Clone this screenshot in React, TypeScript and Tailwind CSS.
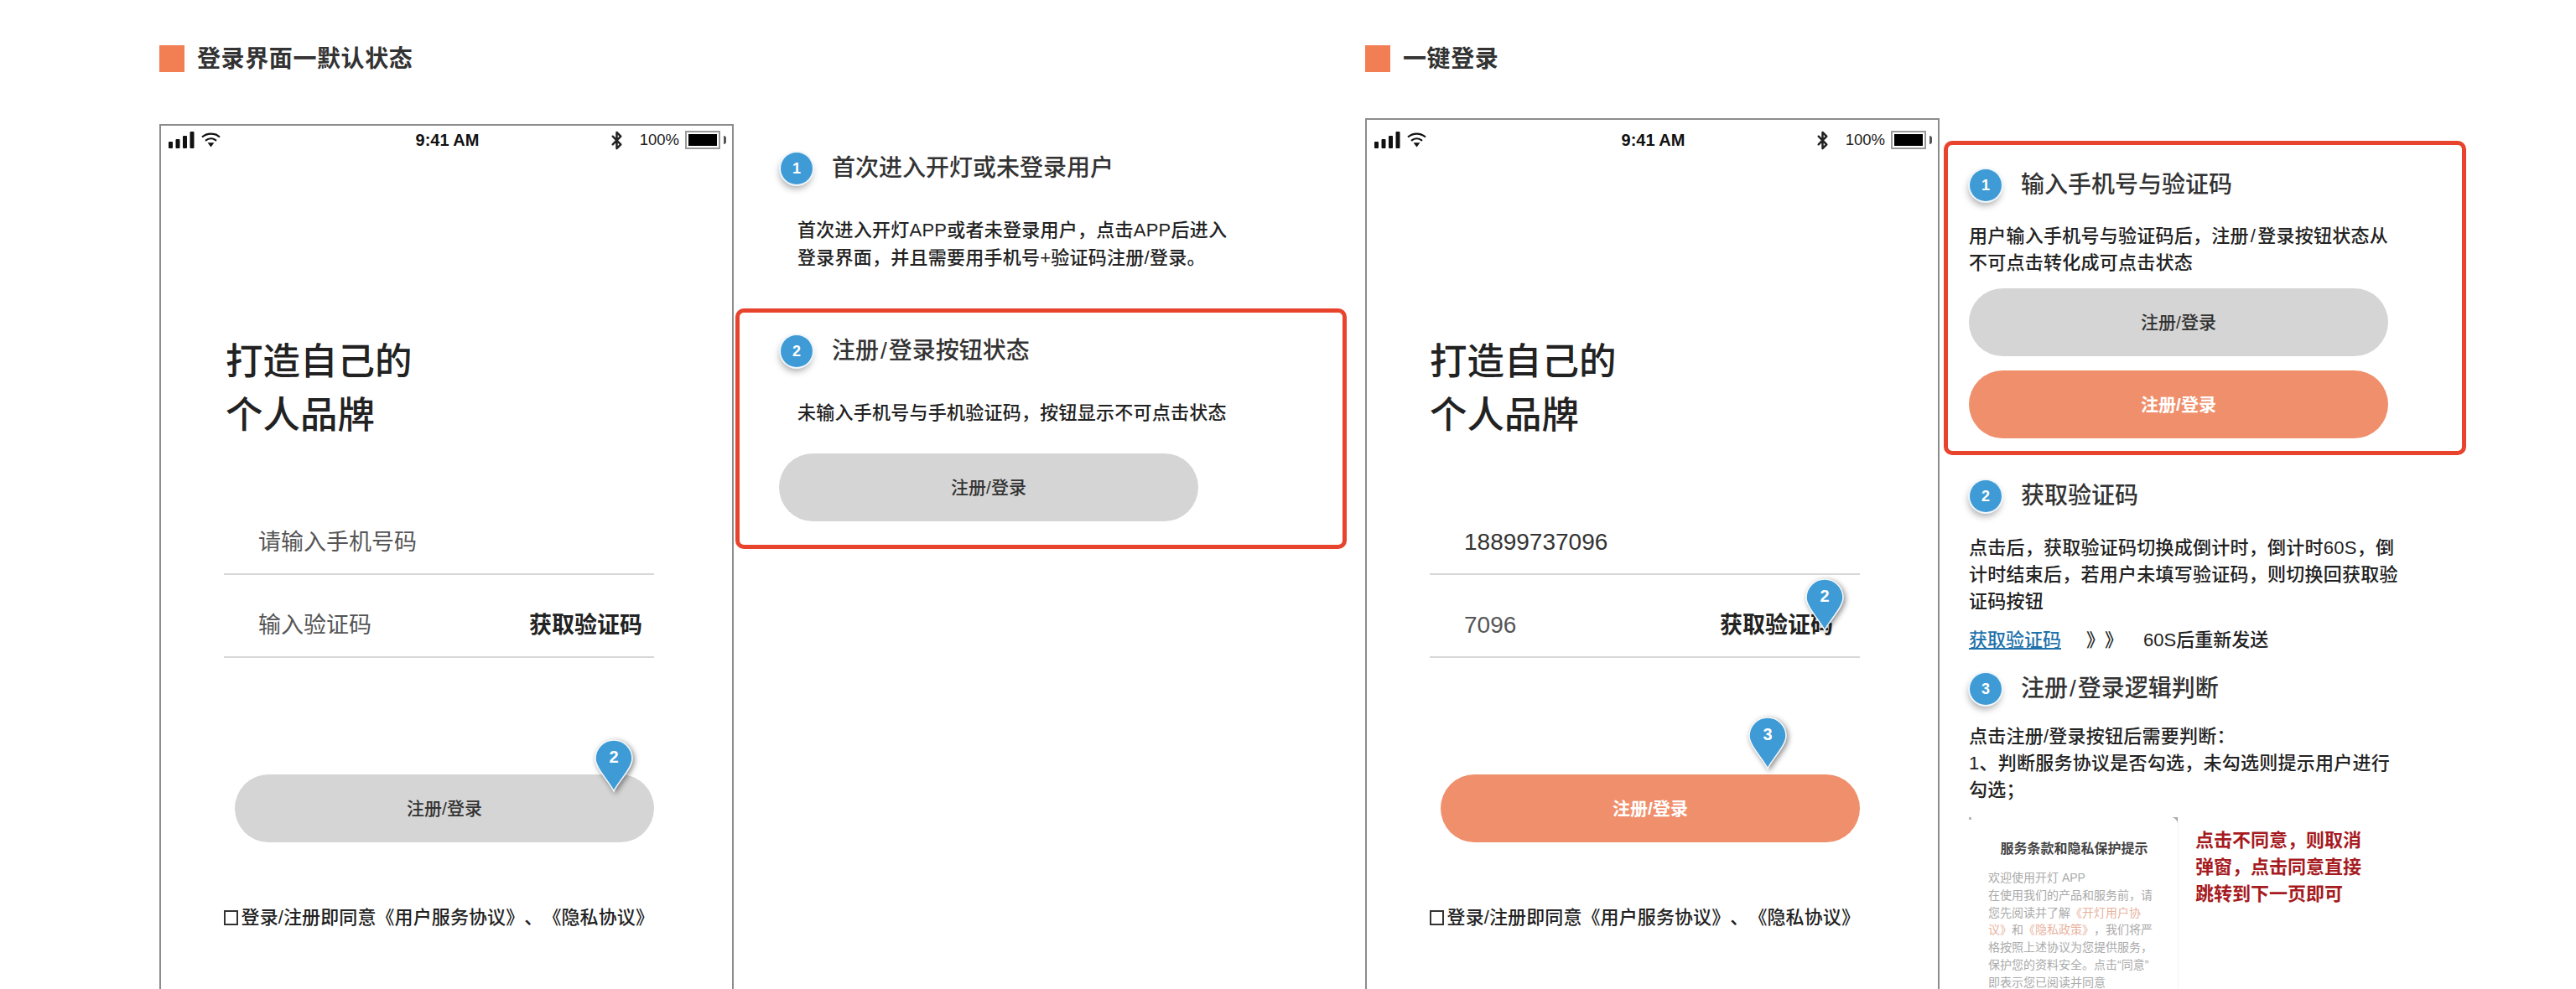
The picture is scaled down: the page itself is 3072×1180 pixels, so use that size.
import React from "react";
import { Bluetooth } from "lucide-react";

function SignalIcon() {
  return (
    <svg width="31" height="20" viewBox="0 0 31 20" fill="#111">
      <rect x="0" y="12" width="5" height="8" rx="1" />
      <rect x="8.5" y="9" width="5" height="11" rx="1" />
      <rect x="17" y="5" width="5" height="15" rx="1" />
      <rect x="25.5" y="0" width="5" height="20" rx="1" />
    </svg>
  );
}

function WifiIcon() {
  return (
    <svg width="23" height="18" viewBox="0 0 23 18" fill="none" stroke="#111" strokeWidth="2.2">
      <path d="M1 5.5 C7 0.2 16 0.2 22 5.5" />
      <path d="M5 9.8 C9 6.4 14 6.4 18 9.8" />
      <path d="M7.6 12.2 L15.4 12.2 L11.5 17.5 Z" fill="#111" stroke="none" />
    </svg>
  );
}

function StatusBar() {
  return (
    <div className="grid h-[34px] grid-cols-3 items-center pl-[9px] pr-[7px]">
      <div className="flex items-center gap-[8px]">
        <SignalIcon />
        <WifiIcon />
      </div>
      <div className="text-center text-[20px] font-bold leading-none text-[#111]">9:41 AM</div>
      <div className="flex items-center justify-end">
        <Bluetooth size={23} strokeWidth={2.6} color="#222" />
        <span className="ml-[16px] text-[18.5px] leading-none text-[#222]">100%</span>
        <div className="ml-[7px] h-[22px] w-[42px] border-2 border-[#9a9a9a] p-[2px]">
          <div className="h-full w-full bg-black" />
        </div>
        <div className="ml-[4px] h-[10px] w-[3px] rounded-r-full bg-[#555]" />
      </div>
    </div>
  );
}

function Pin({ n, className }: { n: number; className: string }) {
  return (
    <div className={`absolute h-[64px] w-[48px] ${className}`}>
      <svg width="48" height="64" viewBox="0 0 48 64" className="drop-shadow-[2px_2px_3px_rgba(0,0,0,0.45)]">
        <path
          d="M24 62 C19 51 2 35 2 23 A22 22 0 0 1 46 23 C46 35 29 51 24 62 Z"
          fill="#3f9bd6"
          stroke="#f4f8fb"
          strokeWidth="1.6"
        />
      </svg>
      <span className="absolute left-0 right-0 top-[9px] text-center text-[20px] font-bold leading-[24px] text-white">
        {n}
      </span>
    </div>
  );
}

function Badge({ n }: { n: number }) {
  return (
    <div className="flex h-[38px] w-[38px] shrink-0 items-center justify-center rounded-full bg-[#3f9bd6] text-[18px] font-bold leading-none text-white shadow-[-1px_5px_8px_rgba(0,0,0,0.35)] ring-2 ring-[#f0f6fb]">
      {n}
    </div>
  );
}

function SubmitButton({ active, className }: { active?: boolean; className: string }) {
  return (
    <div
      className={`flex h-[81px] w-[500px] items-center justify-center rounded-full text-[21px] ${
        active ? "bg-[#f08f6c] font-bold text-white" : "bg-[#d5d5d5] font-medium text-[#333]"
      } ${className}`}
    >
      注册/登录
    </div>
  );
}

function SectionTitle({ children }: { children: React.ReactNode }) {
  return (
    <div className="flex h-[32px] items-center gap-[15px]">
      <div className="h-[32px] w-[30px] bg-[#f27f54]" />
      <h2 className="pt-[2px] text-[28px] font-semibold leading-[32px] tracking-[0.6px] text-[#333]">{children}</h2>
    </div>
  );
}

function Slash() {
  return <span className="mx-[2px]">/</span>;
}

function Phone({ filled }: { filled?: boolean }) {
  return (
    <div
      className={`relative h-[1100px] w-[685px] shrink-0 border-2 border-[#8c8c8c] ${
        filled ? "mt-[55px] pt-[7px]" : "mt-[62px]"
      }`}
    >
      <StatusBar />
      <h1
        className={`mt-[216px] text-[44.5px] font-medium leading-[64px] text-[#222] ${
          filled ? "ml-[75px]" : "ml-[77px]"
        }`}
      >
        打造自己的
        <br />
        个人品牌
      </h1>
      <div className="ml-[75px] mt-[59px] flex w-[513px] flex-col">
        <div className="flex h-[99px] items-end border-b-2 border-[#d8d8d8] pb-[21px] pl-[41px]">
          <span className={`leading-[32px] ${filled ? "text-[28px] text-[#333]" : "text-[27px] text-[#555]"}`}>
            {filled ? "18899737096" : "请输入手机号码"}
          </span>
        </div>
        <div
          className={`flex h-[99px] items-end justify-between border-b-2 border-[#d8d8d8] pb-[21px] pl-[41px] ${
            filled ? "pr-[32px]" : "pr-[14px]"
          }`}
        >
          <span className={`leading-[32px] text-[#555] ${filled ? "text-[28px]" : "text-[27px]"}`}>
            {filled ? "7096" : "输入验证码"}
          </span>
          <span className="text-[27px] font-semibold leading-[32px] text-[#222]">获取验证码</span>
        </div>
        <SubmitButton active={filled} className="mt-[139px] self-end" />
        <div className="mt-[75px] flex h-[30px] items-center gap-[4px] whitespace-nowrap">
          <div className="h-[18px] w-[18px] border-2 border-[#333]" />
          <span className="text-[22px] font-medium leading-[30px] tracking-[0.1px] text-[#222]">
            登录/注册即同意《用户服务协议》、《隐私协议》
          </span>
        </div>
      </div>
      {filled ? (
        <>
          <Pin n={2} className="left-[522px] top-[547px]" />
          <Pin n={3} className="left-[454px] top-[712px]" />
        </>
      ) : (
        <Pin n={2} className="left-[516px] top-[732px]" />
      )}
    </div>
  );
}

function NoteHeading({ n, children }: { n: number; children: React.ReactNode }) {
  return (
    <div className="flex h-[38px] items-center gap-[23px]">
      <Badge n={n} />
      <h3 className="whitespace-nowrap text-[28px] font-medium leading-[38px] text-[#333]">{children}</h3>
    </div>
  );
}

function ModalPreview() {
  return (
    <div className="relative h-[230px] w-[250px] shrink-0 border-r border-[#f4f4f4] pl-[23px] pr-[8px] pt-[27px]">
      <svg width="7" height="8" viewBox="0 0 7 8" className="absolute right-0 top-0">
        <path d="M0 0 L7 0 L7 8 C7 4 4 1 0 0 Z" fill="#a8a8a8" />
      </svg>
      <div className="absolute left-0 top-0 h-[3px] w-[3px] bg-[#b5b5b5]" />
      <div className="-ml-[13px] text-center text-[16px] font-semibold leading-[22px] text-[#444]">
        服务条款和隐私保护提示
      </div>
      <p className="mt-[13px] whitespace-nowrap text-[14px] leading-[20.8px] text-[#aaa]">
        欢迎使用开灯 APP
        <br />
        在使用我们的产品和服务前，请
        <br />
        您先阅读并了解<span className="text-[#e8b39e]">《开灯用户协</span>
        <br />
        <span className="text-[#e8b39e]">议》</span>和<span className="text-[#e8b39e]">《隐私政策》</span>，我们将严
        <br />
        格按照上述协议为您提供服务，
        <br />
        保护您的资料安全。点击“同意”
        <br />
        即表示您已阅读并同意
      </p>
    </div>
  );
}

function DefaultNotes() {
  return (
    <div className="ml-[2px] mt-[62px] w-[729px] shrink-0">
      <div className="pl-[54px] pt-[34px]">
        <NoteHeading n={1}>首次进入开灯或未登录用户</NoteHeading>
      </div>
      <p className="ml-[74px] mt-[38px] whitespace-nowrap text-[22px] font-medium leading-[33px] tracking-[0.25px] text-[#222]">
        首次进入开灯APP或者未登录用户，点击APP后进入
        <br />
        登录界面，并且需要用手机号+验证码注册/登录。
      </p>
      <div className="mt-[44px] rounded-[10px] border-[5px] border-[#e8432d] pb-[28px] pl-[47px] pt-[27px]">
        <div className="pl-[2px]">
          <NoteHeading n={2}>
            注册
            <Slash />
            登录按钮状态
          </NoteHeading>
        </div>
        <p className="ml-[22px] mt-[38px] whitespace-nowrap text-[22px] font-medium leading-[33px] tracking-[0.25px] text-[#222]">
          未输入手机号与手机验证码，按钮显示不可点击状态
        </p>
        <SubmitButton className="mt-[32px]" />
      </div>
    </div>
  );
}

function QuickNotes() {
  return (
    <div className="ml-[5px] mt-[55px] w-[623px] shrink-0">
      <div className="mt-[27px] rounded-[10px] border-[5px] border-[#e8432d] pb-[15px] pl-[25px] pt-[29px]">
        <div className="pl-px">
          <NoteHeading n={1}>输入手机号与验证码</NoteHeading>
        </div>
        <p className="mt-[26px] whitespace-nowrap text-[22px] font-medium leading-[32px] tracking-[0.25px] text-[#222]">
          用户输入手机号与验证码后，注册
          <Slash />
          登录按钮状态从
          <br />
          不可点击转化成可点击状态
        </p>
        <SubmitButton className="mt-[14px]" />
        <SubmitButton active className="mt-[17px]" />
      </div>
      <div className="pl-[31px] pt-[30px]">
        <NoteHeading n={2}>获取验证码</NoteHeading>
        <p className="-ml-px mt-[27px] whitespace-nowrap text-[22px] font-medium leading-[32px] tracking-[0.25px] text-[#222]">
          点击后，获取验证码切换成倒计时，倒计时60S，倒
          <br />
          计时结束后，若用户未填写验证码，则切换回获取验
          <br />
          证码按钮
        </p>
        <div className="-ml-px mt-[14px] flex h-[32px] items-center whitespace-nowrap text-[22px] font-medium leading-[32px] text-[#222]">
          <span className="text-[#1f72ab] underline decoration-2 underline-offset-2">获取验证码</span>
          <span className="ml-[30px]">》》</span>
          <span className="ml-[24px]">60S后重新发送</span>
        </div>
        <div className="mt-[23px]">
          <NoteHeading n={3}>
            注册
            <Slash />
            登录逻辑判断
          </NoteHeading>
        </div>
        <p className="-ml-px mt-[22px] whitespace-nowrap text-[22px] font-medium leading-[32px] tracking-[0.25px] text-[#222]">
          点击注册/登录按钮后需要判断：
          <br />
          1、判断服务协议是否勾选，未勾选则提示用户进行
          <br />
          勾选；
        </p>
        <div className="-ml-px mt-[16px] flex gap-[20px]">
          <ModalPreview />
          <p className="mt-[12px] whitespace-nowrap text-[22px] font-semibold leading-[32px] text-[#a61b1f]">
            点击不同意，则取消
            <br />
            弹窗，点击同意直接
            <br />
            跳转到下一页即可
          </p>
        </div>
      </div>
    </div>
  );
}

export default function App() {
  return (
    <div className="flex h-[1180px] w-[3072px] overflow-hidden bg-white pl-[190px] pt-[54px] [font-family:'Liberation_Sans','Noto_Sans_CJK_SC',sans-serif] [text-spacing-trim:space-all]">
      <section className="w-[1438px] shrink-0">
        <SectionTitle>登录界面一默认状态</SectionTitle>
        <div className="flex">
          <Phone />
          <DefaultNotes />
        </div>
      </section>
      <section className="w-[1313px] shrink-0">
        <SectionTitle>一键登录</SectionTitle>
        <div className="flex">
          <Phone filled />
          <QuickNotes />
        </div>
      </section>
    </div>
  );
}
